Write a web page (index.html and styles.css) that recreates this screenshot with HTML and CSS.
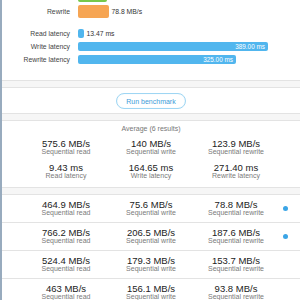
FILE: index.html
```html
<!DOCTYPE html>
<html lang="en">
<head>
    <meta charset="UTF-8">
    <meta name="viewport" content="width=device-width, initial-scale=1.0">
    <title>Disk Benchmark</title>
    <link rel="stylesheet" href="styles.css">
</head>
<body>
<div class="app">

    <section class="chart">
        <div class="bars speed">
            <!-- write row, scrolled mostly out of view -->
            <div class="bar-row">
                <span class="bar-label"></span>
                <div class="bar-cell"><div class="bar green" style="width: 29px"></div></div>
            </div>
            <div class="bar-row">
                <span class="bar-label">Rewrite</span>
                <div class="bar-cell"><div class="bar orange" style="width: 30.5px"></div><span class="bar-value">78.8 MB/s</span></div>
            </div>
        </div>

        <div class="bars latency">
            <div class="bar-row">
                <span class="bar-label">Read latency</span>
                <div class="bar-cell"><div class="bar blue" style="width: 5.5px"></div><span class="bar-value">13.47 ms</span></div>
            </div>
            <div class="bar-row">
                <span class="bar-label">Write latency</span>
                <div class="bar-cell"><div class="bar blue" style="width: 190px"><span class="bar-inner">389.00 ms</span></div></div>
            </div>
            <div class="bar-row">
                <span class="bar-label">Rewrite latency</span>
                <div class="bar-cell"><div class="bar blue" style="width: 158px"><span class="bar-inner">325.00 ms</span></div></div>
            </div>
        </div>
    </section>

    <div class="band"></div>

    <div class="toolbar">
        <button class="run-button">Run benchmark</button>
    </div>

    <div class="band"></div>

    <section class="average">
        <div class="average-title">Average (6 results)</div>
        <div class="metrics">
            <div class="metric"><div class="value">575.6 MB/s</div><div class="label">Sequential read</div></div>
            <div class="metric"><div class="value">140 MB/s</div><div class="label">Sequential write</div></div>
            <div class="metric"><div class="value">123.9 MB/s</div><div class="label">Sequential rewrite</div></div>
            <div class="metric"><div class="value">9.43 ms</div><div class="label">Read latency</div></div>
            <div class="metric"><div class="value">164.65 ms</div><div class="label">Write latency</div></div>
            <div class="metric"><div class="value">271.40 ms</div><div class="label">Rewrite latency</div></div>
        </div>
    </section>

    <div class="band"></div>

    <div class="results">
        <div class="result-row">
            <div class="metric"><div class="value">464.9 MB/s</div><div class="label">Sequential read</div></div>
            <div class="metric"><div class="value">75.6 MB/s</div><div class="label">Sequential write</div></div>
            <div class="metric"><div class="value">78.8 MB/s</div><div class="label">Sequential rewrite</div></div>
            <span class="dot"></span>
        </div>
        <div class="result-row">
            <div class="metric"><div class="value">766.2 MB/s</div><div class="label">Sequential read</div></div>
            <div class="metric"><div class="value">206.5 MB/s</div><div class="label">Sequential write</div></div>
            <div class="metric"><div class="value">187.6 MB/s</div><div class="label">Sequential rewrite</div></div>
            <span class="dot"></span>
        </div>
        <div class="result-row">
            <div class="metric"><div class="value">524.4 MB/s</div><div class="label">Sequential read</div></div>
            <div class="metric"><div class="value">179.3 MB/s</div><div class="label">Sequential write</div></div>
            <div class="metric"><div class="value">153.7 MB/s</div><div class="label">Sequential rewrite</div></div>
        </div>
        <div class="result-row">
            <div class="metric"><div class="value">463 MB/s</div><div class="label">Sequential read</div></div>
            <div class="metric"><div class="value">156.1 MB/s</div><div class="label">Sequential write</div></div>
            <div class="metric"><div class="value">93.8 MB/s</div><div class="label">Sequential rewrite</div></div>
        </div>
    </div>

</div>
</body>
</html>
```

FILE: styles.css
```css
html, body {
    margin: 0;
    padding: 0;
    background: #fff;
    overflow: hidden;
}

body {
    font-family: "Liberation Sans", Arial, sans-serif;
    color: #222;
}

.app {
    border-left: 2px solid #98abbe;
    height: 300px;
    overflow: hidden;
}

/* chart at the top */
.chart {
    margin-top: -11px;
    padding-bottom: 16px;
    border-bottom: 1px solid #e3e3e3;
}

.bars {
    display: flex;
    flex-direction: column;
}

.speed {
    gap: 3px;
}

.speed .bar-row {
    height: 13px;
}

.latency {
    gap: 4px;
    margin-top: 11px;
}

.latency .bar-row {
    height: 9px;
}

.bar-row {
    display: grid;
    grid-template-columns: 68px 1fr;
    column-gap: 8px;
    align-items: center;
}

.bar-label {
    text-align: right;
    font-size: 6.8px;
    color: #444;
    white-space: nowrap;
}

.bar-cell {
    display: flex;
    align-items: center;
    height: 100%;
}

.bar {
    height: 100%;
    border-radius: 2px;
    display: flex;
    align-items: center;
    justify-content: flex-end;
    box-sizing: border-box;
    padding-right: 3px;
}

.green {
    background-color: #76c84b;
}

.orange {
    background-color: #f6a553;
}

.blue {
    background-color: #51b6ee;
}

.bar-value {
    font-size: 6.8px;
    color: #333;
    margin-left: 3px;
    white-space: nowrap;
}

.bar-inner {
    font-size: 6.4px;
    color: #fff;
    white-space: nowrap;
}

/* grey gaps between blocks */
.band {
    height: 6px;
    background-color: #f6f6f6;
    border-bottom: 1px solid #e3e3e3;
}

.toolbar {
    display: flex;
    justify-content: center;
    padding: 5px 0 4px;
    border-bottom: 1px solid #e3e3e3;
}

.run-button {
    width: 70px;
    height: 16px;
    padding: 0;
    border: 1px solid #9fd6f3;
    border-radius: 8px;
    background: #fff;
    box-shadow: inset 0 0 1px #c6e8f9;
    color: #3d9bd8;
    font-family: "Liberation Sans", Arial, sans-serif;
    font-size: 7px;
    cursor: pointer;
}

/* average block */
.average {
    padding: 3px 0 7px;
    border-bottom: 1px solid #e3e3e3;
}

.average-title {
    text-align: center;
    font-size: 7px;
    line-height: 10px;
    color: #777;
}

.metrics {
    display: grid;
    grid-template-columns: repeat(3, 85px);
    justify-content: center;
    row-gap: 7px;
    margin-top: 5px;
}

.metric {
    text-align: center;
    white-space: nowrap;
}

.value {
    font-size: 9.5px;
    line-height: 9px;
    color: #222;
}

.label {
    font-size: 7px;
    line-height: 8px;
    color: #7a7a7a;
}

/* single results */
.result-row {
    display: grid;
    grid-template-columns: 1fr 85px 85px 85px 1fr;
    align-items: center;
    padding: 5px 0;
    border-bottom: 1px solid #e3e3e3;
}

.result-row .metric:first-child {
    grid-column: 2;
}

.dot {
    width: 5px;
    height: 5px;
    margin-left: 4px;
    border-radius: 50%;
    background-color: #3ba5e6;
}
```
